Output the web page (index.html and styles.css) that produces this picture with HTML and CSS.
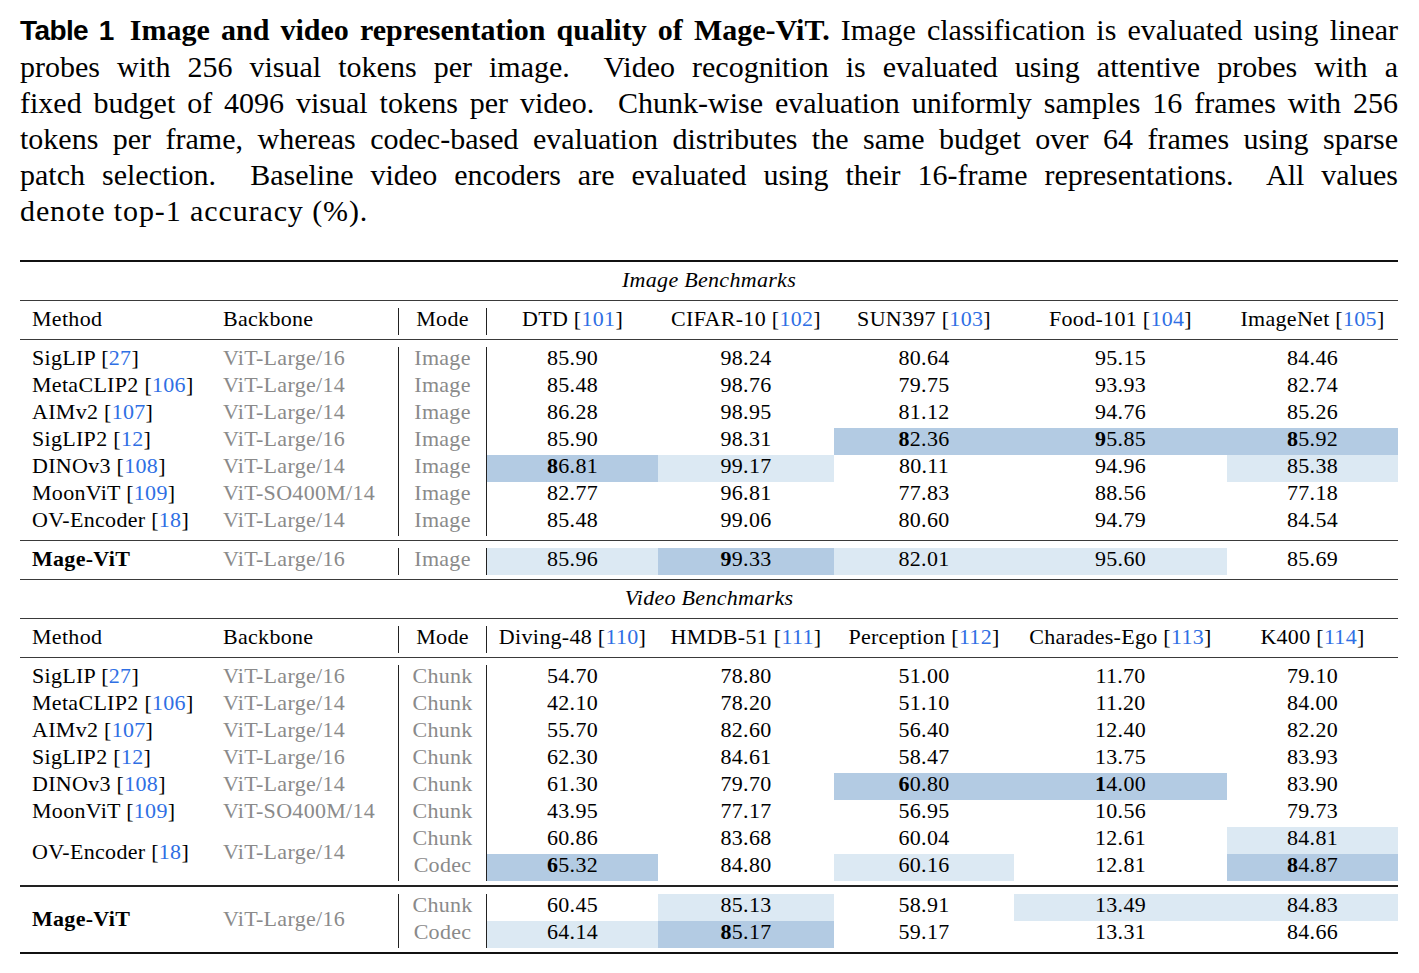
FILE: index.html
```html
<!DOCTYPE html>
<html lang="en">
<head>
<meta charset="utf-8">
<title>Table 1 – Mage-ViT</title>
<link rel="stylesheet" href="styles.css">
</head>
<body>
<div class="page">
  <p class="caption">
    <span class="ln"><span class="tag">Table 1</span><span class="ttl">Image and video representation quality of Mage-ViT.</span> Image classification is evaluated using linear</span>
    <span class="ln">probes with 256 visual tokens per image.&nbsp; Video recognition is evaluated using attentive probes with a</span>
    <span class="ln">fixed budget of 4096 visual tokens per video.&nbsp; Chunk-wise evaluation uniformly samples 16 frames with 256</span>
    <span class="ln">tokens per frame, whereas codec-based evaluation distributes the same budget over 64 frames using sparse</span>
    <span class="ln">patch selection.&nbsp; Baseline video encoders are evaluated using their 16-frame representations.&nbsp; All values</span>
    <span class="ln last">denote top-1 accuracy (%).</span>
  </p>

  <table class="results">
    <colgroup>
      <col class="c-method"><col class="c-backbone"><col class="c-mode">
      <col class="c-a"><col class="c-b"><col class="c-c"><col class="c-d"><col class="c-e">
    </colgroup>
    <tbody>
      <tr class="rule"><td class="r-top" colspan="8"></td></tr>
      <tr class="sect"><td colspan="8">Image Benchmarks</td></tr>
      <tr class="rule"><td class="r-mid" colspan="8"></td></tr>
      <tr class="hd">
        <td class="m">Method</td><td class="b">Backbone</td><td class="md">Mode</td>
        <td class="n">DTD [<span class="cite">101</span>]</td>
        <td class="n">CIFAR-10 [<span class="cite">102</span>]</td>
        <td class="n">SUN397 [<span class="cite">103</span>]</td>
        <td class="n">Food-101 [<span class="cite">104</span>]</td>
        <td class="n">ImageNet [<span class="cite">105</span>]</td>
      </tr>
      <tr class="rule"><td class="r-mid" colspan="8"></td></tr>
      <tr><td class="m">SigLIP [<span class="cite">27</span>]</td><td class="b">ViT-Large/16</td><td class="md">Image</td><td class="n">85.90</td><td class="n">98.24</td><td class="n">80.64</td><td class="n">95.15</td><td class="n">84.46</td></tr>
      <tr><td class="m">MetaCLIP2 [<span class="cite">106</span>]</td><td class="b">ViT-Large/14</td><td class="md">Image</td><td class="n">85.48</td><td class="n">98.76</td><td class="n">79.75</td><td class="n">93.93</td><td class="n">82.74</td></tr>
      <tr><td class="m">AIMv2 [<span class="cite">107</span>]</td><td class="b">ViT-Large/14</td><td class="md">Image</td><td class="n">86.28</td><td class="n">98.95</td><td class="n">81.12</td><td class="n">94.76</td><td class="n">85.26</td></tr>
      <tr><td class="m">SigLIP2 [<span class="cite">12</span>]</td><td class="b">ViT-Large/16</td><td class="md">Image</td><td class="n">85.90</td><td class="n">98.31</td><td class="n hi"><b>8</b>2.36</td><td class="n hi"><b>9</b>5.85</td><td class="n hi"><b>8</b>5.92</td></tr>
      <tr><td class="m">DINOv3 [<span class="cite">108</span>]</td><td class="b">ViT-Large/14</td><td class="md">Image</td><td class="n hi"><b>8</b>6.81</td><td class="n lo">99.17</td><td class="n">80.11</td><td class="n">94.96</td><td class="n lo">85.38</td></tr>
      <tr><td class="m">MoonViT [<span class="cite">109</span>]</td><td class="b">ViT-SO400M/14</td><td class="md">Image</td><td class="n">82.77</td><td class="n">96.81</td><td class="n">77.83</td><td class="n">88.56</td><td class="n">77.18</td></tr>
      <tr><td class="m">OV-Encoder [<span class="cite">18</span>]</td><td class="b">ViT-Large/14</td><td class="md">Image</td><td class="n">85.48</td><td class="n">99.06</td><td class="n">80.60</td><td class="n">94.79</td><td class="n">84.54</td></tr>
      <tr class="rule"><td class="r-mid" colspan="8"></td></tr>
      <tr><td class="m ours">Mage-ViT</td><td class="b">ViT-Large/16</td><td class="md">Image</td><td class="n lo">85.96</td><td class="n hi"><b>9</b>9.33</td><td class="n lo">82.01</td><td class="n lo">95.60</td><td class="n">85.69</td></tr>
      <tr class="rule"><td class="r-mid" colspan="8"></td></tr>

      <tr class="sect"><td colspan="8">Video Benchmarks</td></tr>
      <tr class="rule"><td class="r-mid" colspan="8"></td></tr>
      <tr class="hd">
        <td class="m">Method</td><td class="b">Backbone</td><td class="md">Mode</td>
        <td class="n">Diving-48 [<span class="cite">110</span>]</td>
        <td class="n">HMDB-51 [<span class="cite">111</span>]</td>
        <td class="n">Perception [<span class="cite">112</span>]</td>
        <td class="n">Charades-Ego [<span class="cite">113</span>]</td>
        <td class="n">K400 [<span class="cite">114</span>]</td>
      </tr>
      <tr class="rule"><td class="r-mid" colspan="8"></td></tr>
      <tr><td class="m">SigLIP [<span class="cite">27</span>]</td><td class="b">ViT-Large/16</td><td class="md">Chunk</td><td class="n">54.70</td><td class="n">78.80</td><td class="n">51.00</td><td class="n">11.70</td><td class="n">79.10</td></tr>
      <tr><td class="m">MetaCLIP2 [<span class="cite">106</span>]</td><td class="b">ViT-Large/14</td><td class="md">Chunk</td><td class="n">42.10</td><td class="n">78.20</td><td class="n">51.10</td><td class="n">11.20</td><td class="n">84.00</td></tr>
      <tr><td class="m">AIMv2 [<span class="cite">107</span>]</td><td class="b">ViT-Large/14</td><td class="md">Chunk</td><td class="n">55.70</td><td class="n">82.60</td><td class="n">56.40</td><td class="n">12.40</td><td class="n">82.20</td></tr>
      <tr><td class="m">SigLIP2 [<span class="cite">12</span>]</td><td class="b">ViT-Large/16</td><td class="md">Chunk</td><td class="n">62.30</td><td class="n">84.61</td><td class="n">58.47</td><td class="n">13.75</td><td class="n">83.93</td></tr>
      <tr><td class="m">DINOv3 [<span class="cite">108</span>]</td><td class="b">ViT-Large/14</td><td class="md">Chunk</td><td class="n">61.30</td><td class="n">79.70</td><td class="n hi"><b>6</b>0.80</td><td class="n hi"><b>1</b>4.00</td><td class="n">83.90</td></tr>
      <tr><td class="m">MoonViT [<span class="cite">109</span>]</td><td class="b">ViT-SO400M/14</td><td class="md">Chunk</td><td class="n">43.95</td><td class="n">77.17</td><td class="n">56.95</td><td class="n">10.56</td><td class="n">79.73</td></tr>
      <tr><td class="m" rowspan="2">OV-Encoder [<span class="cite">18</span>]</td><td class="b" rowspan="2">ViT-Large/14</td><td class="md">Chunk</td><td class="n">60.86</td><td class="n">83.68</td><td class="n">60.04</td><td class="n">12.61</td><td class="n lo">84.81</td></tr>
      <tr><td class="md">Codec</td><td class="n hi"><b>6</b>5.32</td><td class="n">84.80</td><td class="n lo">60.16</td><td class="n">12.81</td><td class="n hi"><b>8</b>4.87</td></tr>
      <tr class="rule"><td class="r-thick" colspan="8"></td></tr>
      <tr><td class="m ours" rowspan="2">Mage-ViT</td><td class="b" rowspan="2">ViT-Large/16</td><td class="md">Chunk</td><td class="n">60.45</td><td class="n lo">85.13</td><td class="n">58.91</td><td class="n lo">13.49</td><td class="n lo">84.83</td></tr>
      <tr><td class="md">Codec</td><td class="n lo">64.14</td><td class="n hi"><b>8</b>5.17</td><td class="n">59.17</td><td class="n">13.31</td><td class="n">84.66</td></tr>
      <tr class="rule"><td class="r-bottom" colspan="8"></td></tr>
    </tbody>
  </table>
</div>
</body>
</html>
```

FILE: styles.css
```css
* { box-sizing: border-box; }

html, body {
  margin: 0;
  padding: 0;
  background: #ffffff;
}

body {
  font-family: "Liberation Serif", "Times New Roman", serif;
  color: #000000;
}

.page {
  width: 1378px;
  margin: 12px 0 0 20px;
}

/* ---------- caption ---------- */
.caption {
  margin: 0 0 31px;
  font-size: 30px;
  line-height: 36px;
  letter-spacing: 0;
}

.caption .ln {
  display: block;
  white-space: nowrap;
  text-align: justify;
  text-align-last: justify;
}

.caption .ln.last {
  text-align: left;
  text-align-last: left;
  letter-spacing: 0.9px;
}

.tag {
  font-family: "Liberation Sans", Arial, sans-serif;
  font-weight: bold;
  font-size: 28px;
  letter-spacing: -0.6px;
  margin-right: 16px;
}

.ttl {
  font-weight: bold;
}

/* ---------- table ---------- */
.results {
  width: 1378px;
  table-layout: fixed;
  border-collapse: separate;
  border-spacing: 0;
  font-size: 22px;
  letter-spacing: 0.3px;
}

.c-method { width: 191px; }
.c-backbone { width: 187px; }
.c-mode { width: 89px; }
.c-a { width: 171px; }
.c-b { width: 176px; }
.c-c { width: 180px; }
.c-d { width: 213px; }
.c-e { width: 171px; }

.results td {
  height: 27px;
  padding: 0 0 6px;
  line-height: 21px;
  white-space: nowrap;
  vertical-align: middle;
}

.results .m,
.results .b {
  padding-left: 12px;
  text-align: left;
}

.results .b {
  color: #8a8a8a;
}

.results .md {
  text-align: center;
  color: #8a8a8a;
  border-left: 1px solid #222222;
  border-right: 1px solid #222222;
}

.results .hd .md,
.results .hd .b {
  color: #000000;
}

.results .n {
  text-align: center;
}

.results .ours {
  font-weight: bold;
}

.results .sect td {
  text-align: center;
  font-style: italic;
}

.cite {
  color: #2f6fe4;
}

.hi { background: #b3cbe3; }
.lo { background: #dce9f3; }

/* ---------- booktabs-like rules ---------- */
.results .rule td {
  padding: 0;
  font-size: 0;
  line-height: 0;
  background-repeat: no-repeat;
}

.results td.r-top {
  height: 9px;
  background-image: linear-gradient(#111111, #111111);
  background-position: 0 0;
  background-size: 100% 2px;
}

.results td.r-mid {
  height: 12px;
  background-image: linear-gradient(#3a3a3a, #3a3a3a);
  background-position: 0 4px;
  background-size: 100% 1px;
}

.results td.r-thick {
  height: 13px;
  background-image: linear-gradient(#222222, #222222);
  background-position: 0 4px;
  background-size: 100% 2px;
}

.results td.r-bottom {
  height: 6px;
  background-image: linear-gradient(#111111, #111111);
  background-position: 0 4px;
  background-size: 100% 2px;
}
```
